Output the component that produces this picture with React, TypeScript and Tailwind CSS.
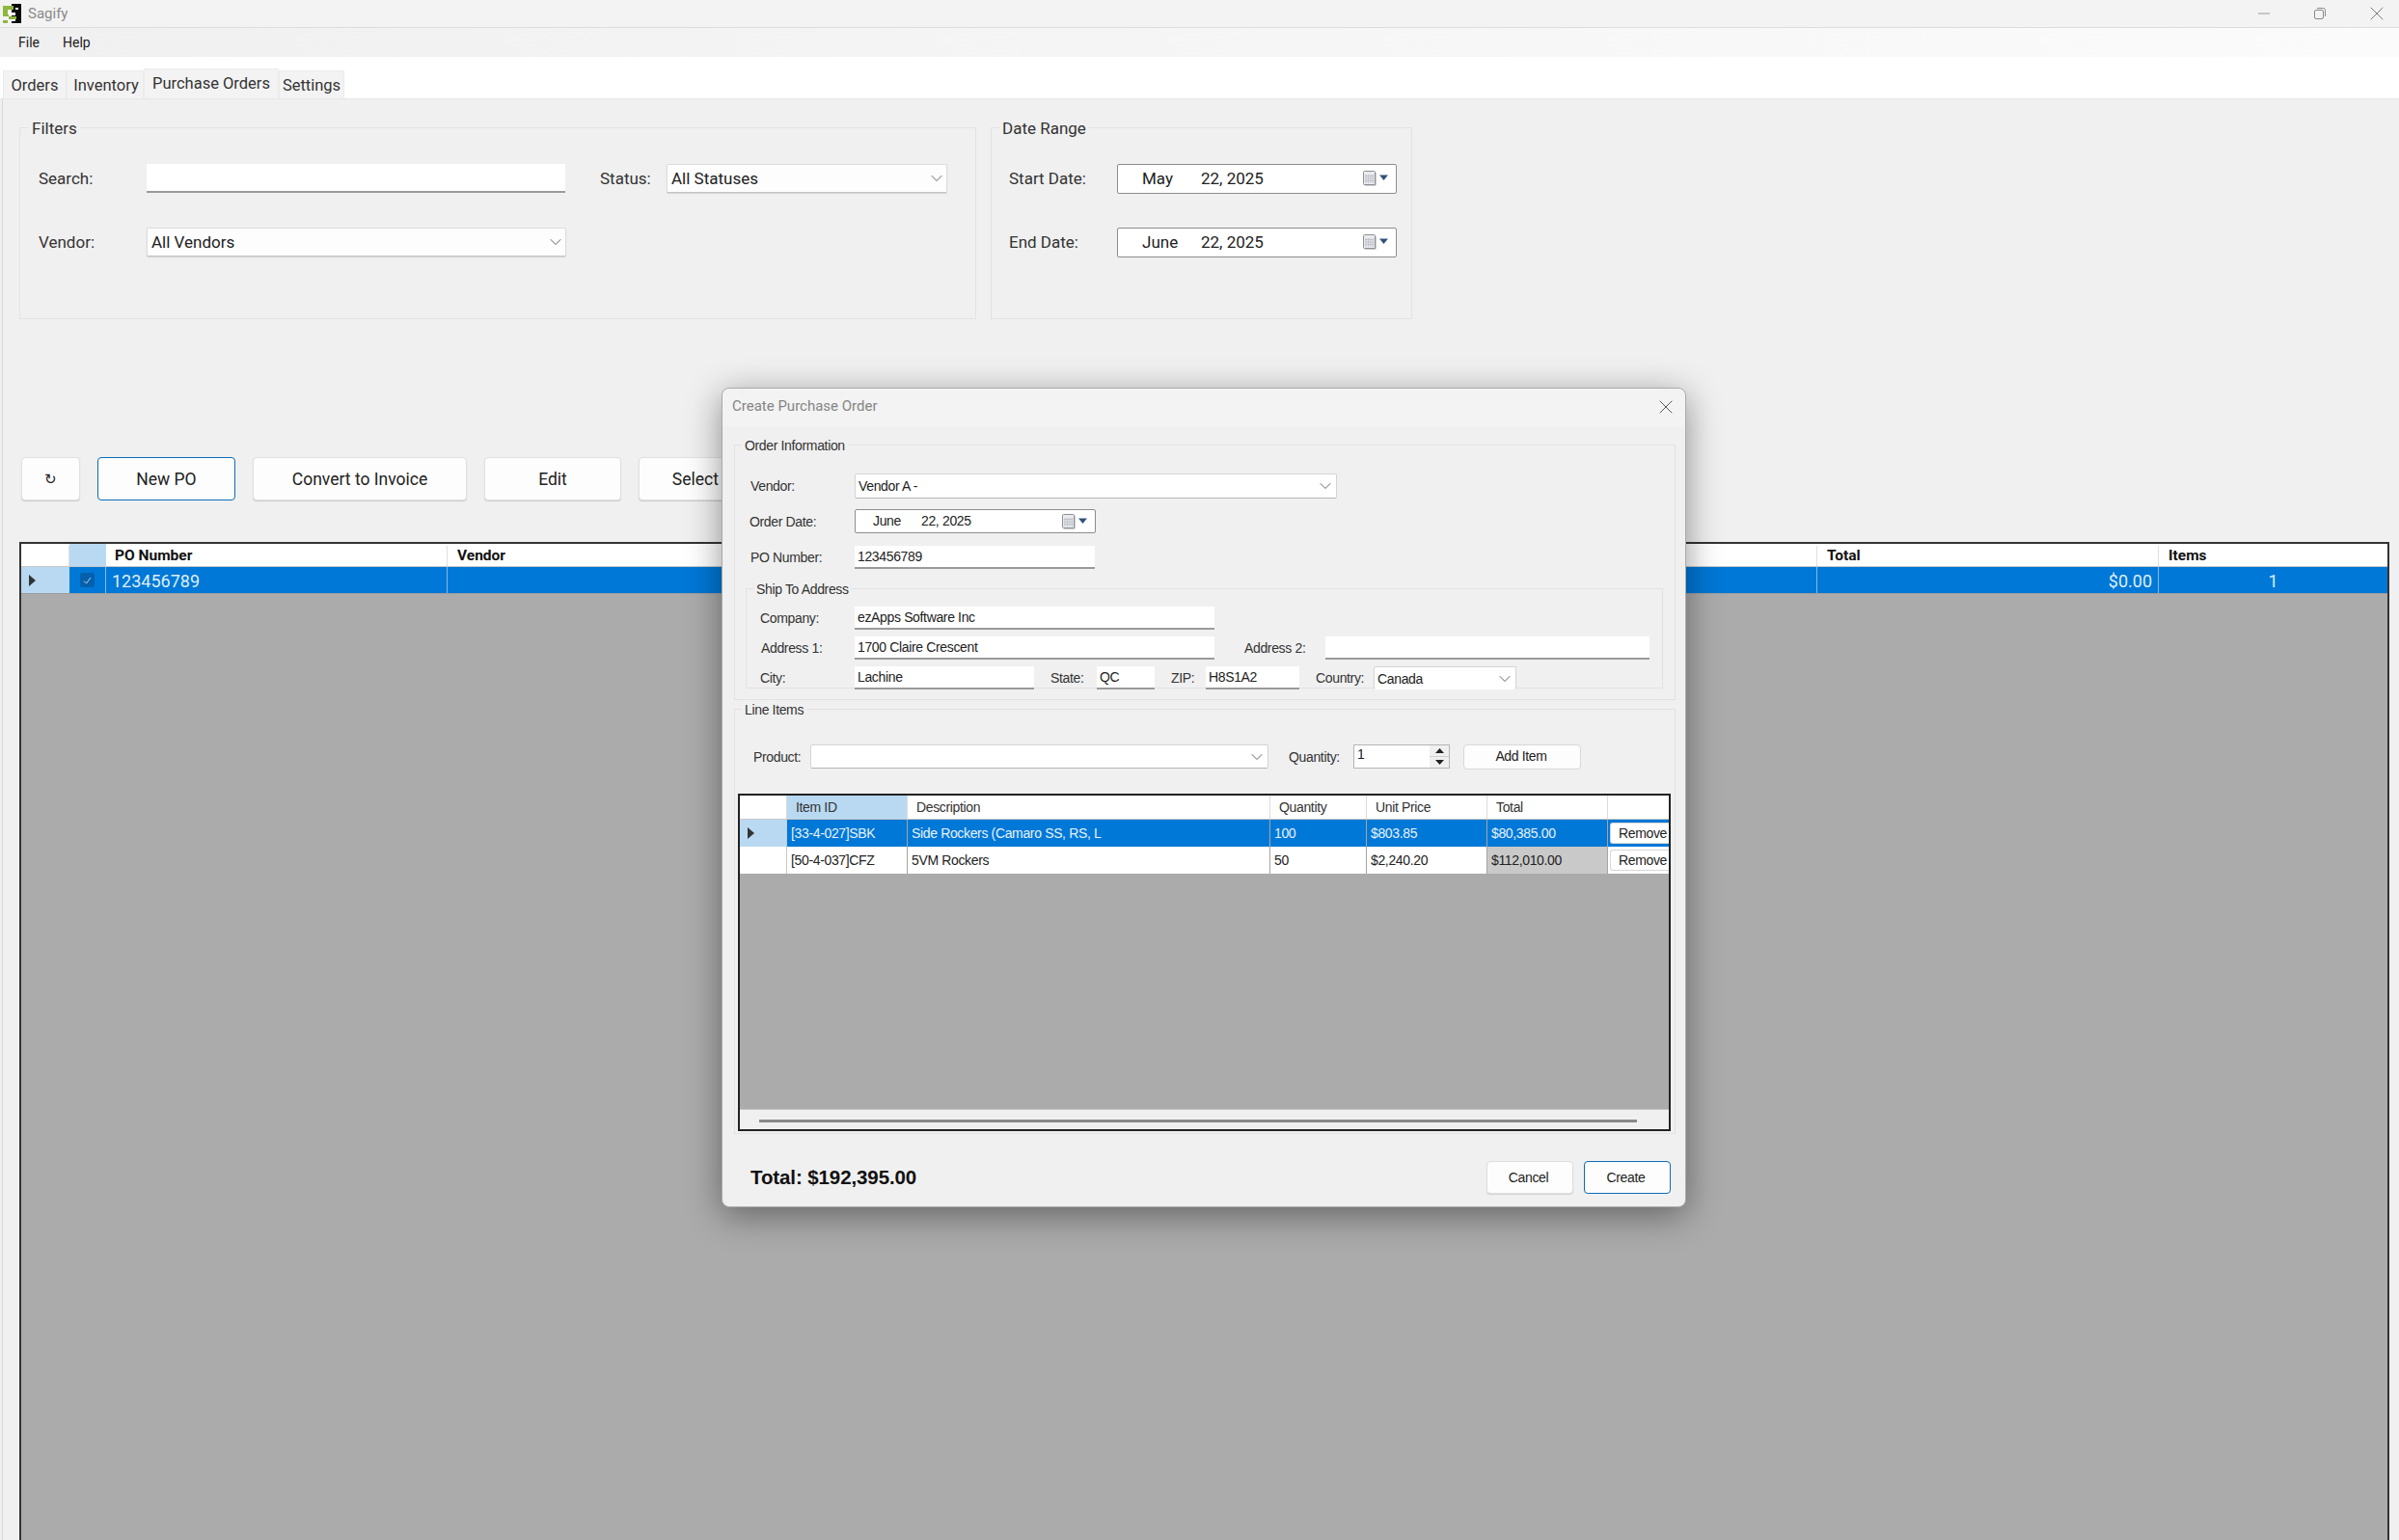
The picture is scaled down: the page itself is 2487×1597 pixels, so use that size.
import { ChevronDown, X } from "lucide-react";
import type { ReactNode } from "react";

const ui = "font-['Roboto',sans-serif]";
const dlg = "font-['Liberation_Sans',sans-serif] tracking-[-0.35px]";

function SagifyLogo() {
  return (
    <svg width="21" height="22" viewBox="0 0 21 22" shapeRendering="crispEdges">
      <rect x="10" y="1" width="10" height="20" fill="#0a0a0a" />
      <rect x="14" y="5" width="3" height="2" fill="#f3f3f3" />
      <rect x="1" y="3" width="11" height="4" fill="#8fb73e" />
      <rect x="1" y="7" width="5" height="5" fill="#8fb73e" />
      <path d="M6 9h4v1h4v3H6z" fill="#ffffff" />
      <rect x="1" y="12" width="6" height="2" fill="#8fb73e" />
      <rect x="7" y="14" width="8" height="3" fill="#8fb73e" />
      <rect x="10" y="17" width="4" height="2" fill="#ffffff" />
      <rect x="1" y="18" width="5" height="3" fill="#8fb73e" />
    </svg>
  );
}

function CalendarGlyph() {
  return (
    <span className="flex items-center gap-[3px]">
      <svg width="14" height="16" viewBox="0 0 14 16">
        <rect x="1.500" y="1.500" width="12" height="14" rx="1" fill="#9a9a9a" />
        <rect x="0.500" y="0.500" width="12" height="14" rx="1" fill="#e9ebef" stroke="#8c8f94" />
        <path d="M3 4v9M5.500 4v9M8 4v9M10.500 4v9M2 5.500h9M2 8h9M2 10.500h9" stroke="#b7bcc4" strokeWidth="0.8" />
      </svg>
      <svg width="9" height="6" viewBox="0 0 9 6" className="-mt-[2px]">
        <path d="M0 0.500h9L4.500 6z" fill="#33507c" />
      </svg>
    </span>
  );
}

function GroupBox({
  label,
  className,
  labelClass,
  children,
}: {
  label: string;
  className: string;
  labelClass: string;
  children?: ReactNode;
}) {
  return (
    <div className={`relative border border-[#e2e2e2] ${className}`}>
      <span className={`absolute bg-[#f0f0f0] px-[3px] leading-none ${labelClass}`}>{label}</span>
      {children}
    </div>
  );
}

function MainCombo({ value, className }: { value: string; className: string }) {
  return (
    <div
      className={`flex h-[30px] items-center justify-between rounded-[2px] border border-[#dcdcdc] border-b-[#c4c4c4] bg-[#fdfdfd] pl-[4px] text-[17px] text-[#222] shadow-[0_1px_1px_rgba(0,0,0,0.12)] ${className}`}
    >
      <span className="pt-[2px]">{value}</span>
      <ChevronDown size={20} strokeWidth={1.100} color="#555" />
    </div>
  );
}

function MainDate({ month, className }: { month: string; className?: string }) {
  return (
    <div
      className={`flex h-[31px] w-[290px] items-center rounded-[2px] border border-[#8d8d8d] bg-white pr-[8px] text-[17px] text-[#222] ${className ?? ""}`}
    >
      <span className="ml-[25px] w-[61px] pt-[2px]">{month}</span>
      <span className="flex-1 pt-[2px]">22, 2025</span>
      <CalendarGlyph />
    </div>
  );
}

function MainButton({ children, width, focus }: { children: ReactNode; width: string; focus?: boolean }) {
  return (
    <div
      className={`flex h-[45px] shrink-0 items-center justify-center rounded-[4px] bg-[#fdfdfd] pt-[2px] text-[17.500px] text-[#222] ${width} ${
        focus
          ? "border border-[#0a6cb8]"
          : "border border-[#e0e0e0] shadow-[0_1px_1px_rgba(0,0,0,0.15)]"
      }`}
    >
      {children}
    </div>
  );
}

function TextBox({ value, className }: { value?: string; className: string }) {
  return (
    <div
      className={`flex items-center border-b-[2px] border-[#9a9a9a] bg-white pl-[3px] pt-[1px] text-[14px] text-[#222] ${className}`}
    >
      {value}
    </div>
  );
}

function DlgCombo({ value, className }: { value?: string; className: string }) {
  return (
    <div
      className={`flex items-center justify-between rounded-[2px] border border-[#d4d4d4] border-b-[#b5b5b5] bg-white pl-[3px] pr-[1px] text-[14px] text-[#222] ${className}`}
    >
      <span className="pt-[1px]">{value}</span>
      <ChevronDown size={20} strokeWidth={1.100} color="#555" />
    </div>
  );
}

function DlgLabel({ children, className }: { children: ReactNode; className: string }) {
  return <span className={`shrink-0 text-[14px] leading-none text-[#333] ${className}`}>{children}</span>;
}

function RemoveButton() {
  return (
    <div className="ml-[2px] flex h-[22px] flex-1 items-center justify-center rounded-l-[3px] border border-r-0 border-[#d8d8d8] bg-white pl-[6px] text-[14px] text-[#222]">
      Remove
    </div>
  );
}

const lineColumns = [
  { label: "Item ID", width: "w-[125px]" },
  { label: "Description", width: "w-[376px]" },
  { label: "Quantity", width: "w-[100px]" },
  { label: "Unit Price", width: "w-[125px]" },
  { label: "Total", width: "w-[125px]" },
];

function LineRow({
  cells,
  selected,
}: {
  cells: string[];
  selected?: boolean;
}) {
  return (
    <div className="flex h-[28px] text-[14px]">
      <div
        className={`flex w-[49px] shrink-0 items-center border-r border-[#c8c8c8] pl-[8px] ${
          selected ? "bg-[#b9d9f2]" : "bg-white"
        }`}
      >
        {selected && (
          <svg width="7" height="12" viewBox="0 0 7 12">
            <path d="M0 0l7 6-7 6z" fill="#333" />
          </svg>
        )}
      </div>
      {cells.map((cell, i) => (
        <div
          key={i}
          className={`flex shrink-0 items-center border-r border-[#a5a5a5] pl-[4px] pt-[1px] ${lineColumns[i].width} ${
            selected
              ? "bg-[#0078d7] text-[#e8f2fb]"
              : i === 4
                ? "bg-[#c9c9c9] text-[#222]"
                : "bg-white text-[#222]"
          }`}
        >
          {cell}
        </div>
      ))}
      <div className={`flex flex-1 items-center ${selected ? "bg-[#0078d7]" : "bg-white"}`}>
        <RemoveButton />
      </div>
    </div>
  );
}

function PurchaseDialog() {
  return (
    <div
      className={`absolute left-[748px] top-[402px] flex h-[850px] w-[1000px] flex-col rounded-[8px] border border-[#a9a9a9] bg-[#f0f0f0] shadow-[0_8px_36px_rgba(0,0,0,0.42)] ${dlg}`}
    >
      {/* Title */}
      <div className="flex h-[39px] shrink-0 items-center justify-between rounded-t-[8px] bg-[#f3f3f3] pb-[2px] pl-[10px] pr-[8px] font-['Roboto',sans-serif] text-[15px] tracking-normal text-[#858585]">
        <span>Create Purchase Order</span>
        <X size={24} strokeWidth={0.900} color="#444" />
      </div>

      <div className="flex flex-col px-[12px]">
        {/* Order info */}
        <GroupBox
          label="Order Information"
          labelClass="left-[7px] -top-[7px] text-[14px] text-[#333]"
          className="mt-[19px] h-[265px] w-[976px]"
        >
          <div className="flex h-full flex-col pt-[29px]">
            <div className="flex h-[25px] items-center">
              <DlgLabel className="ml-[16px] w-[108px]">Vendor:</DlgLabel>
              <DlgCombo value="Vendor A -" className="h-[26px] w-[500px]" />
            </div>
            <div className="mt-[12px] flex h-[25px] items-center">
              <DlgLabel className="ml-[15px] w-[109px]">Order Date:</DlgLabel>
              <div className="flex h-[25px] w-[250px] items-center rounded-[2px] border border-[#8d8d8d] bg-white pr-[8px] text-[14px] text-[#222]">
                <span className="ml-[18px] w-[50px]">June</span>
                <span className="flex-1">22, 2025</span>
                <CalendarGlyph />
              </div>
            </div>
            <div className="mt-[13px] flex h-[24px] items-center">
              <DlgLabel className="ml-[16px] w-[108px]">PO Number:</DlgLabel>
              <TextBox value="123456789" className="h-[24px] w-[249px]" />
            </div>

            {/* Ship to */}
            <GroupBox
              label="Ship To Address"
              labelClass="left-[7px] -top-[7px] text-[14px] text-[#333]"
              className="ml-[11px] mt-[20px] h-[104px] w-[951px]"
            >
              <div className="flex flex-col pt-[18px]">
                <div className="flex h-[24px] items-center">
                  <DlgLabel className="ml-[14px] w-[98px]">Company:</DlgLabel>
                  <TextBox value="ezApps Software Inc" className="h-[24px] w-[373px]" />
                </div>
                <div className="mt-[7px] flex h-[24px] items-center">
                  <DlgLabel className="ml-[15px] w-[97px]">Address 1:</DlgLabel>
                  <TextBox value="1700 Claire Crescent" className="h-[24px] w-[373px]" />
                  <DlgLabel className="ml-[31px] w-[84px]">Address 2:</DlgLabel>
                  <TextBox className="h-[24px] w-[336px]" />
                </div>
                <div className="mt-[7px] flex h-[24px] items-center">
                  <DlgLabel className="ml-[14px] w-[98px]">City:</DlgLabel>
                  <TextBox value="Lachine" className="h-[24px] w-[186px]" />
                  <DlgLabel className="ml-[17px] w-[48px]">State:</DlgLabel>
                  <TextBox value="QC" className="h-[24px] w-[60px]" />
                  <DlgLabel className="ml-[17px] w-[36px]">ZIP:</DlgLabel>
                  <TextBox value="H8S1A2" className="h-[24px] w-[97px]" />
                  <DlgLabel className="ml-[17px] w-[60px]">Country:</DlgLabel>
                  <DlgCombo value="Canada" className="h-[24px] w-[148px] border-b-0" />
                </div>
              </div>
            </GroupBox>
          </div>
        </GroupBox>

        {/* Line items */}
        <GroupBox
          label="Line Items"
          labelClass="left-[7px] -top-[7px] text-[14px] text-[#333]"
          className="mt-[9px] h-[441px] w-[976px]"
        >
          <div className="flex flex-col pt-[36px]">
            <div className="flex h-[25px] items-center">
              <DlgLabel className="ml-[19px] w-[59px]">Product:</DlgLabel>
              <DlgCombo className="h-[25px] w-[475px] border-[#9a9a9a]" />
              <DlgLabel className="ml-[21px] w-[67px]">Quantity:</DlgLabel>
              <div className="flex h-[25px] w-[100px] items-center justify-between border border-[#b5b5b5] bg-white pl-[3px] text-[14px] text-[#222]">
                <span className="-mt-1">1</span>
                <div className="flex h-full w-[20px] flex-col">
                  <div className="flex flex-1 items-center justify-center border-b border-[#d0d0d0] bg-[#f0f0f0]">
                    <svg width="9" height="5" viewBox="0 0 9 5">
                      <path d="M4.500 0L9 5H0z" fill="#222" />
                    </svg>
                  </div>
                  <div className="flex flex-1 items-center justify-center bg-[#f0f0f0]">
                    <svg width="9" height="5" viewBox="0 0 9 5">
                      <path d="M0 0h9L4.500 5z" fill="#222" />
                    </svg>
                  </div>
                </div>
              </div>
              <div className="ml-[14px] flex h-[26px] w-[122px] items-center justify-center rounded-[4px] border border-[#d8d8d8] bg-[#fdfdfd] pr-[2px] text-[14px] text-[#222]">
                Add Item
              </div>
            </div>

            {/* Items grid */}
            <div className="ml-[3px] mt-[26px] flex h-[350px] w-[967px] flex-col border-[2px] border-[#222] bg-[#ababab]">
              <div className="flex h-[25px] shrink-0 border-b border-[#c8c8c8] bg-white text-[14px] text-[#333]">
                <div className="w-[49px] shrink-0 border-r border-[#d8d8d8]" />
                {lineColumns.map((col, i) => (
                  <div
                    key={col.label}
                    className={`flex shrink-0 items-center border-r border-[#dcdcdc] pl-[9px] pt-[1px] ${col.width} ${
                      i === 0 ? "bg-[#b9d9f2]" : ""
                    }`}
                  >
                    {col.label}
                  </div>
                ))}
              </div>
              <LineRow
                selected
                cells={["[33-4-027]SBK", "Side Rockers (Camaro SS, RS, L", "100", "$803.85", "$80,385.00"]}
              />
              <LineRow cells={["[50-4-037]CFZ", "5VM Rockers", "50", "$2,240.20", "$112,010.00"]} />
              <div className="flex-1" />
              <div className="flex h-[21px] shrink-0 items-center border-t border-[#c4c4c4] bg-[#f0f0f0] pl-[20px]">
                <div className="mt-[3px] h-[3px] w-[910px] bg-[#8a8a8a]" />
              </div>
            </div>
          </div>
        </GroupBox>

        {/* Footer */}
        <div className="mt-[28px] flex items-center justify-between pl-[17px] pr-[3px]">
          <span className="text-[20.500px] font-bold tracking-[-0.100px] text-[#111]">Total: $192,395.00</span>
          <div className="flex gap-[11px] text-[14px] text-[#222]">
            <div className="flex h-[34px] w-[90px] items-center justify-center rounded-[4px] border border-[#dedede] bg-[#fdfdfd] pr-[3px] shadow-[0_1px_1px_rgba(0,0,0,0.12)]">
              Cancel
            </div>
            <div className="flex h-[34px] w-[90px] items-center justify-center rounded-[4px] border border-[#0a6cb8] bg-[#fdfdfd] pr-[3px]">
              Create
            </div>
          </div>
        </div>
      </div>
    </div>
  );
}

export default function App() {
  return (
    <div className={`relative flex h-[1597px] w-[2487px] flex-col overflow-hidden bg-[#f0f0f0] ${ui}`}>
      {/* Title bar */}
      <div className="flex h-[29px] shrink-0 items-center border-b border-[#dcdcdc] bg-[#f3f3f3]">
        <div className="ml-[2px] flex w-[26px]">
          <SagifyLogo />
        </div>
        <span className="ml-[1px] pt-[1px] text-[15px] text-[#8a8a8a]">Sagify</span>
        <div className="ml-auto flex items-center pr-[11px]">
          <svg width="12" height="12" viewBox="0 0 12 12" className="mr-[46px]">
            <path d="M0 6h12" stroke="#9a9a9a" />
          </svg>
          <svg width="12" height="12" viewBox="0 0 12 12" className="mr-[41px]">
            <rect x="0.500" y="2.500" width="9" height="9" rx="1.500" fill="none" stroke="#8a8a8a" />
            <path d="M3 0.500h6.500a2 2 0 0 1 2 2V9" fill="none" stroke="#8a8a8a" />
          </svg>
          <X size={24} strokeWidth={0.900} color="#6f6f6f" />
        </div>
      </div>

      {/* Menu */}
      <div className="flex h-[30px] shrink-0 items-center gap-[24px] bg-gradient-to-r from-[#f0f0f0] to-[#fbfbfb] pl-[19px] text-[14px] text-[#222]">
        <span>File</span>
        <span>Help</span>
      </div>

      {/* Tabs */}
      <div className="flex h-[44px] shrink-0 items-end border-b border-[#e6e6e6] bg-white pl-[3px] text-[16.500px] text-[#333]">
        <div className="flex h-[29px] w-[66px] items-center justify-center border border-b-0 border-[#ececec] bg-[#f3f3f3] pt-[3px]">Orders</div>
        <div className="flex h-[29px] w-[80px] items-center justify-center border border-b-0 border-[#ececec] bg-[#f3f3f3] pl-[2px] pt-[3px]">Inventory</div>
        <div className="flex h-[31px] w-[140px] items-start justify-center border border-b-0 border-[#ececec] bg-[#f3f3f3] pt-[3px]">Purchase Orders</div>
        <div className="flex h-[29px] w-[68px] items-center justify-center border border-b-0 border-[#ececec] bg-[#f3f3f3] pt-[3px]">Settings</div>
      </div>

      {/* Tab page */}
      <div className="ml-[2px] flex flex-1 flex-col border-l border-[#d8d8d8] pl-[17px] text-[#333]">
        <div className="mt-[29px] flex gap-[15px]">
          <GroupBox
            label="Filters"
            labelClass="left-[9px] -top-[8px] text-[17px] text-[#333]"
            className="h-[199px] w-[992px]"
          >
            <div className="flex flex-col pt-[37px]">
              <div className="flex h-[30px] items-center">
                <span className="ml-[19px] w-[112px] pt-[2px] text-[17px]">Search:</span>
                <div className="h-[30px] w-[434px] border-b-[2px] border-[#9a9a9a] bg-white" />
                <span className="ml-[36px] w-[69px] pt-[2px] text-[17px]">Status:</span>
                <MainCombo value="All Statuses" className="w-[291px]" />
              </div>
              <div className="mt-[36px] flex h-[30px] items-center">
                <span className="ml-[19px] w-[112px] pt-[2px] text-[17px]">Vendor:</span>
                <MainCombo value="All Vendors" className="w-[435px]" />
              </div>
            </div>
          </GroupBox>
          <GroupBox
            label="Date Range"
            labelClass="left-[8px] -top-[8px] text-[17px] text-[#333]"
            className="h-[199px] w-[437px]"
          >
            <div className="flex flex-col pt-[37px]">
              <div className="flex h-[30px] items-center">
                <span className="ml-[18px] w-[112px] pt-[2px] text-[17px]">Start Date:</span>
                <MainDate month="May" />
              </div>
              <div className="mt-[36px] flex h-[30px] items-center">
                <span className="ml-[18px] w-[112px] pt-[2px] text-[17px]">End Date:</span>
                <MainDate month="June" />
              </div>
            </div>
          </GroupBox>
        </div>

        {/* Toolbar */}
        <div className="mt-[143px] flex gap-[18px] pl-[2px]">
          <MainButton width="w-[61px]">
            <span className="text-[15px]">↻</span>
          </MainButton>
          <MainButton width="w-[143px]" focus>New PO</MainButton>
          <MainButton width="w-[222px]">Convert to Invoice</MainButton>
          <MainButton width="w-[142px]">Edit</MainButton>
          <MainButton width="w-[142px]">Select All</MainButton>
        </div>

        {/* Orders grid */}
        <div className="mt-[43px] flex w-[2457px] flex-1 flex-col border-[2px] border-b-0 border-[#333] bg-[#ababab]">
          <div className="flex h-[24px] shrink-0 border-b border-[#c8c8c8] bg-white pt-[2px] text-[15.500px] font-bold text-[#111]">
            <div className="w-[50px] shrink-0 border-r border-[#e0e0e0]" />
            <div className="-mt-[2px] w-[38px] shrink-0 bg-[#b9d9f2]" />
            <div className="flex w-[354px] shrink-0 items-center border-r border-[#e0e0e0] pl-[9px]">PO Number</div>
            <div className="flex w-[1419px] shrink-0 items-center pl-[10px]">Vendor</div>
            <div className="flex w-[355px] shrink-0 items-center border-x border-[#e0e0e0] pl-[10px]">Total</div>
            <div className="flex flex-1 items-center pl-[10px]">Items</div>
          </div>
          <div className="flex h-[28px] shrink-0 border-b border-[#9d9d9d] bg-[#0078d7] text-[18px] text-[#dfeefa]">
            <div className="flex w-[50px] shrink-0 items-center bg-[#b9d9f2] pl-[8px]">
              <svg width="7" height="12" viewBox="0 0 7 12">
                <path d="M0 0l7 6-7 6z" fill="#333" />
              </svg>
            </div>
            <div className="flex w-[38px] shrink-0 items-center justify-center border-r border-[#8ab8dd]">
              <div className="flex h-[15px] w-[15px] items-center justify-center rounded-[2px] bg-[#0460ac]">
                <svg width="9" height="8" viewBox="0 0 9 8">
                  <path d="M1 4.500L3.500 7 8 1" fill="none" stroke="#b8d6ee" strokeWidth="1" />
                </svg>
              </div>
            </div>
            <div className="flex w-[354px] shrink-0 items-center border-r border-[#8ab8dd] pl-[6px] pt-[1px]">123456789</div>
            <div className="w-[1419px] shrink-0" />
            <div className="flex w-[355px] shrink-0 items-center justify-end border-x border-[#8ab8dd] pr-[6px] pt-[1px]">$0.00</div>
            <div className="flex flex-1 items-center justify-center pt-[1px]">1</div>
          </div>
        </div>
      </div>

      <PurchaseDialog />
    </div>
  );
}
